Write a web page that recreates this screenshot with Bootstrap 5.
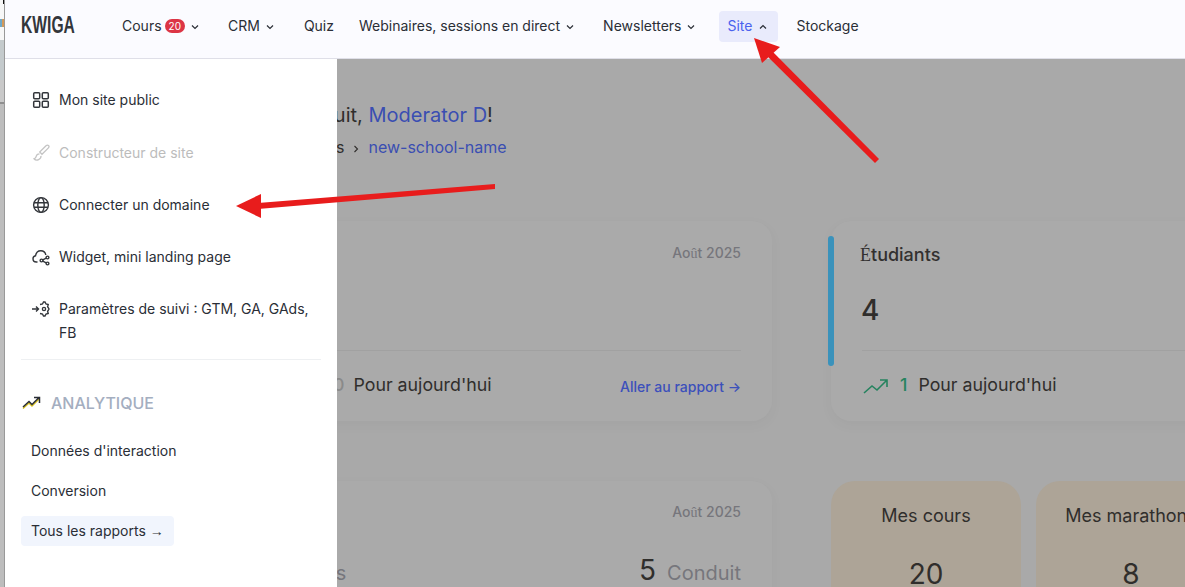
<!DOCTYPE html>
<html lang="fr">
<head>
<meta charset="utf-8">
<title>KWIGA</title>
<link href="https://cdn.jsdelivr.net/npm/bootstrap@5.3.0/dist/css/bootstrap.min.css" rel="stylesheet">
<style>
html,body{height:587px;overflow:hidden}
body{font-family:Inter,"Liberation Sans",sans-serif;font-size:14px;color:#2a2e36;background:#c4c4c4}
.fb{font-family:"Liberation Serif",serif}
.fs{font-family:"Liberation Sans",sans-serif}
.side-strip{width:5px;flex:none;border-right:1px solid #999;
  background:
    linear-gradient(#111,#111) 3px 0/2px 4px no-repeat,
    linear-gradient(#6fa8c8,#6fa8c8) 0 19px/2px 8px no-repeat,
    linear-gradient(#d49a5a,#d49a5a) 2px 19px/2px 8px no-repeat,
    linear-gradient(#f7f7f7 0,#f7f7f7 40px,#c4cacc 40px,#c4cacc 80px,#c9c9c9 80px,#c9c9c9 102px,#8f8f8f 102px,#8f8f8f 104px,#bdbdbd 104px,#bdbdbd 100%)}
.shell{width:1180px;flex:none;height:587px;overflow:hidden;position:relative}
.topbar{height:59px;background:#fbfbff;border-bottom:1px solid #dfdfe8;padding:11px 0 0 16px}
.logo{font-family:"Liberation Sans","Arial",sans-serif;font-weight:700;font-size:23px;line-height:29px;color:#33363b;width:93px;transform:scaleX(.68);transform-origin:left center;white-space:nowrap}
.topitem{height:31px;padding:0 11px 0 8px;border-radius:4px;color:#2a2e36;text-decoration:none;line-height:29px;white-space:nowrap}
.topitem.plain{padding-right:8px}
.topitem.on{background:#e9ebfc;color:#4a62ee}
.topitem svg{margin-left:6px}
.topitem.on svg{margin-left:7px}
.topcount{background:#dc3545;color:#fff;font-size:10px;border-radius:8px;padding:1px 4px;line-height:12px;margin-left:3px;display:inline-block;vertical-align:1px}
.after-cours{margin-left:10px}
.after-crm{margin-left:11px}
.after-quiz{margin-left:9px}
.after-web{margin-left:10px}
.after-news{margin-left:13px}
.after-site{margin-left:10px}
.stage{background:#a9a9a9;height:528px;overflow:hidden;padding:42px 0 0 260px;color:#302e2c}
.hello{font-size:20px;line-height:28px;white-space:nowrap;margin-left:-9px}
.hello a,.crumbs a{color:#3a4eb2;text-decoration:none}
.crumbs{font-size:16px;line-height:24px;margin:6px 0 0 -7px;white-space:nowrap;color:#302e2c}
.crumbs svg{margin:0 8px 0 8px}
.dash{gap:59px;margin-top:62px;width:1300px}
.dash-left{width:507px;flex:none}
.dash-right{width:600px;flex:none}
.pane{background:#aaa;border-radius:20px;box-shadow:0 4px 14px rgba(0,0,0,.035);padding:22px 31px 0 24px;position:relative}
.pane-a{height:200px}
.pane-b{height:240px;margin-top:60px;padding-top:21px}
.month{font-size:14px;color:#76767c;line-height:20px;font-weight:500}
.pane-rule{border-top:1px solid #a1a1a1;position:absolute;left:31px;right:31px;top:129px}
.pane-foot{position:absolute;top:152px;left:32px;right:31px;font-size:17.8px;line-height:24px;white-space:nowrap}
.go{font-size:14px;font-weight:500;color:#3c50bb;text-decoration:none;margin-top:2px}
.tally{font-size:28px;line-height:36px;color:#302e2c}
.tally-word{font-size:20px;color:#76767c;margin-left:11px}
.left-tally{margin-top:29px}
.stud-bar{position:absolute;left:-3px;top:15px;width:6px;height:130px;background:#3a92bb;border-radius:3px}
.stud-title{font-size:18px;font-weight:500;line-height:24px;color:#32302f;margin-left:5px}
.stud-num{font-size:28px;font-weight:500;line-height:36px;margin:25px 0 0 6px}
.up{color:#26835f;font-weight:500;margin:0 11px}
.up.zero{color:#8a8a8a;margin:0 9px 0 10px}
.tiles{gap:15px;margin-top:60px}
.tile{width:190px;height:240px;flex:none;background:#ada497;border-radius:24px;text-align:center;padding-top:23px;font-size:18px;line-height:24px;white-space:nowrap;overflow:hidden}
.tile-num{font-size:28px;line-height:36px;margin-top:28px}
.menu-panel{position:absolute;left:0;top:59px;width:332px;height:528px;background:#fff;padding:29px 16px 0;z-index:2}
.entry{display:flex;gap:9px;color:#2a2e36;text-decoration:none;line-height:24px;padding-left:11px;margin-bottom:28px}
.entry.lead-entry{margin-bottom:29px}
.entry svg{flex:none;margin-top:3px}
.entry.off{color:#bcbcbc}
.entry-wrap{margin-bottom:14px}
.split{border-top:1px solid #eef0f2;margin:0 0 31px}
.section-head{display:flex;gap:10px;align-items:center;font-size:16px;font-weight:500;color:#a4aec0;line-height:24px;margin:0 0 21px 1px}
.sublink{display:block;width:fit-content;color:#2a2e36;text-decoration:none;padding:0 10px;line-height:30px;margin-bottom:10px;border-radius:4px}
.sublink.all{background:#f1f5fd}
.ink{position:absolute;left:-5px;top:0;width:1185px;height:587px;z-index:5;pointer-events:none}
</style>
</head>
<body class="d-flex">
<div class="side-strip"></div>
<div class="shell">
  <nav class="topbar d-flex align-items-start">
    <div class="logo">KWIGA</div>
    <a class="topitem" href="#">Cours<span class="topcount">20</span><svg width="8" height="8" viewBox="0 0 8 8" fill="none" stroke="currentColor" stroke-width="1.2"><path d="M1 2.500 4 5.500 7 2.500"/></svg></a>
    <a class="topitem after-cours" href="#">CRM<svg width="8" height="8" viewBox="0 0 8 8" fill="none" stroke="currentColor" stroke-width="1.2"><path d="M1 2.500 4 5.500 7 2.500"/></svg></a>
    <a class="topitem plain after-crm" href="#">Quiz</a>
    <a class="topitem after-quiz" href="#">Webinaires, sessions en direct<svg width="8" height="8" viewBox="0 0 8 8" fill="none" stroke="currentColor" stroke-width="1.2"><path d="M1 2.500 4 5.500 7 2.500"/></svg></a>
    <a class="topitem after-web" href="#">Newsletters<svg width="8" height="8" viewBox="0 0 8 8" fill="none" stroke="currentColor" stroke-width="1.2"><path d="M1 2.500 4 5.500 7 2.500"/></svg></a>
    <a class="topitem on after-news" href="#">Site<svg width="8" height="8" viewBox="0 0 8 8" fill="none" stroke="#2a2e36" stroke-width="1.2"><path d="M1 5.500 4 2.500 7 5.500"/></svg></a>
    <a class="topitem plain after-site" href="#">Stockage</a>
  </nav>
  <div class="stage">
    <div class="hello">Bonne nuit, <a href="#">Moderator D</a>!</div>
    <div class="crumbs">Mes écoles<svg width="8" height="8" viewBox="0 0 8 8" fill="none" stroke="currentColor" stroke-width="1.100"><path d="M2.500 1 5.500 4 2.500 7"/></svg><a href="#">new-school-name</a></div>
    <div class="dash d-flex">
      <div class="dash-left">
        <div class="pane pane-a">
          <div class="month text-end">Ao<span class="fb">û</span>t 2025</div>
          <div class="pane-rule"></div>
          <div class="pane-foot d-flex justify-content-between align-items-start"><span><svg width="26" height="16" viewBox="0 0 26 16" fill="none" stroke="#26835f" stroke-width="1.6"><path d="M1 15 9 8l5 4L24 2M17 2h7v7"/></svg><span class="up zero">0</span>Pour aujourd'hui</span><a class="go" href="#">Aller au rapport →</a></div>
        </div>
        <div class="pane pane-b">
          <div class="month text-end">Ao<span class="fb">û</span>t 2025</div>
          <div class="left-tally d-flex justify-content-between align-items-baseline"><span class="tally-word ms-0">Leads</span><span><span class="tally">5</span><span class="tally-word">Conduit</span></span></div>
        </div>
      </div>
      <div class="dash-right">
        <div class="pane pane-a">
          <div class="stud-bar"></div>
          <div class="stud-title"><span class="fb">É</span>tudiants</div>
          <div class="stud-num">4</div>
          <div class="pane-rule"></div>
          <div class="pane-foot"><svg width="26" height="16" viewBox="0 0 26 16" fill="none" stroke="#26835f" stroke-width="1.6"><path d="M1 15 9 8l5 4L24 2M17 2h7v7"/></svg><span class="up">1</span>Pour aujourd'hui</div>
        </div>
        <div class="tiles d-flex">
          <div class="tile">Mes cours<div class="tile-num">20</div></div>
          <div class="tile">Mes marathons<div class="tile-num">8</div></div>
        </div>
      </div>
    </div>
  </div>
  <div class="menu-panel">
    <a class="entry lead-entry" href="#"><svg width="18" height="18" viewBox="0 0 18 18" fill="none" stroke="#33363b" stroke-width="1.500"><rect x="1.700" y="1.700" width="6" height="6" rx="1"/><rect x="10.300" y="1.700" width="6" height="6" rx="1"/><rect x="1.700" y="10.300" width="6" height="6" rx="1"/><rect x="10.300" y="10.300" width="6" height="6" rx="1"/></svg>Mon site public</a>
    <a class="entry off" href="#"><svg width="18" height="18" viewBox="0 0 18 18" fill="none" stroke="#c4c4c4" stroke-width="1.300"><path d="M16.700 1.700c-.8-.8-1.900-.6-2.700.1L7.700 8l2.300 2.300 6.200-6.200c.8-.8 1.100-1.700.5-2.400z"/><path d="M7.500 9.800c-1.800 0-3 1-3.300 2.500-.2 1.200-1 2-2.200 2.500 1.200 1.300 3.100 1.500 4.600.8 1.500-.7 2.600-2 2.400-3.700"/></svg>Constructeur de site</a>
    <a class="entry" href="#"><svg width="18" height="18" viewBox="0 0 18 18" fill="none" stroke="#33363b" stroke-width="1.400"><circle cx="9" cy="9" r="7.400"/><ellipse cx="9" cy="9" rx="3.200" ry="7.400"/><path d="M2 6.800h14M2 11.200h14"/></svg>Connecter un domaine</a>
    <a class="entry" href="#"><svg width="18" height="18" viewBox="0 0 18 18" fill="none" stroke="#33363b" stroke-width="1.400"><path d="M5.500 14H4.300C2.500 14 1 12.600 1 10.800c0-1.500 1-2.700 2.500-3C4 5 6 2.800 8.800 2.800c2.600 0 4.600 1.800 5 4.200"/><circle cx="9.500" cy="12.500" r="1.400"/><circle cx="15.500" cy="9.500" r="1.400"/><circle cx="15.500" cy="15.500" r="1.400"/><path d="m10.800 11.800 3.400-1.600M10.800 13.200l3.400 1.600"/></svg>Widget, mini landing page</a>
    <a class="entry entry-wrap" href="#"><svg width="18" height="18" viewBox="0 0 18 18" fill="none" stroke="#33363b" stroke-width="1.400"><path d="M0 9h6.500M4 6.500 6.500 9 4 11.500"/><circle cx="12" cy="9" r="1.600"/><path d="M8 4.500 10.500 4l1-2h1.500l1 2 2.200.5-.6 2.200L17 9l-1.400 2.300.6 2.200-2.200.5-1 2h-1.500l-1-2L8 13.500"/></svg><span>Paramètres de suivi : GTM, GA, GAds, FB</span></a>
    <div class="split"></div>
    <div class="section-head"><svg width="19" height="14" viewBox="0 0 19 14" fill="none" stroke-width="1.500"><path d="M1 12.500 7 7l3 3 7-7" stroke="#d8c11f"/><path d="M1 11 7 5.500l3 3 7-7M12 1.500h5.500V7" stroke="#2a2e36"/></svg>ANALYTIQUE</div>
    <a class="sublink" href="#">Données d'interaction</a>
    <a class="sublink" href="#">Conversion</a>
    <a class="sublink all" href="#">Tous les rapports <span class="fs">→</span></a>
  </div>
  <svg class="ink" viewBox="0 0 1185 587"><g fill="#e81c1c"><path d="M875 163 879 159 768 47 762 51z"/><path d="M754 38 780 47 762 63z"/><path d="M495 184 495 189 258 209 258 203z"/><path d="M236 206 261 194 261 218z"/></g></svg>
</div>
<script src="https://cdn.jsdelivr.net/npm/bootstrap@5.3.0/dist/js/bootstrap.bundle.min.js"></script>
</body>
</html>
